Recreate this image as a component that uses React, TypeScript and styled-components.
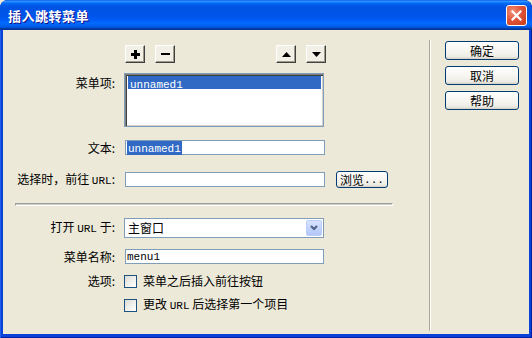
import React from "react";
import styled, { createGlobalStyle } from "styled-components";

const Global = createGlobalStyle`
  html, body { margin: 0; padding: 0; background: #ECE9D8; }
  body { font-family: "Noto Sans CJK SC", "Noto Sans", sans-serif; font-size: 12px; color: #000; }
  * { box-sizing: border-box; }
`;

const Window = styled.div`
  width: 532px;
  height: 338px;
  background: #0842D8;
  border-radius: 8px 8px 0 0;
  display: flex;
  flex-direction: column;
  overflow: hidden;
  box-shadow: inset 1px 0 0 #1F5EE8, inset -1px 0 0 #001EA0, inset 0 -1px 0 #001EA0;
`;

const TitleBar = styled.div`
  height: 30px;
  flex: none;
  display: flex;
  align-items: center;
  justify-content: space-between;
  padding: 0 5px 0 8px;
  border-radius: 8px 8px 0 0;
  background: linear-gradient(180deg, #0058EE 0%, #3593FF 4%, #288EFF 6%, #127DFF 8%, #036FFC 10%, #0262EE 14%, #0057E5 20%, #0054E3 24%, #0055EB 56%, #005BF5 66%, #026AFE 76%, #0062EF 86%, #0052D6 92%, #0040AB 94%, #003092 100%);
`;

const Title = styled.span`
  color: #fff;
  font-weight: bold;
  font-size: 13px;
  line-height: 16px;
  letter-spacing: 0.5px;
  text-shadow: 1px 1px 0 #0F1089;
  margin-top: 1px;
`;

const CloseButton = styled.div`
  width: 21px;
  height: 21px;
  margin-top: 1px;
  border: 1px solid #fff;
  border-radius: 3px;
  background: radial-gradient(circle at 30% 30%, #F0937A 0%, #E0553A 45%, #C73B17 100%);
  display: flex;
  align-items: center;
  justify-content: center;
`;

const Client = styled.div`
  flex: 1;
  margin: 0 3px 4px 3px;
  background: #ECE9D8;
  display: flex;
`;

const MainPanel = styled.div`
  width: 426px;
  flex: none;
  display: flex;
  flex-direction: column;
  padding-top: 15px;
`;

const VDivider = styled.div`
  width: 2px;
  flex: none;
  margin: 10px 0 3px 0;
  border-left: 1px solid #ACA899;
  border-right: 1px solid #fff;
`;

const SidePanel = styled.div`
  flex: 1;
  display: flex;
  flex-direction: column;
  gap: 6px;
  padding: 11px 0 0 14px;
`;

const PushButton = styled.div<{ $w?: number; $h?: number }>`
  width: ${(p) => p.$w ?? 74}px;
  height: ${(p) => p.$h ?? 19}px;
  border: 1px solid #003C74;
  border-radius: 3px;
  background: linear-gradient(180deg, #FFFFFF 0%, #F4F3EE 60%, #ECEBE4 85%, #D6D0C5 100%);
  display: flex;
  align-items: center;
  justify-content: center;
  font-size: 12px;
  line-height: 14px;
  flex: none;
`;

const ToolRow = styled.div`
  margin-left: 122px;
  width: 201px;
  height: 18px;
  display: flex;
  justify-content: space-between;
`;

const ToolGroup = styled.div`
  display: flex;
  gap: 10px;
`;

const SmallButton = styled.div`
  width: 20px;
  height: 18px;
  background: #F1EFE6;
  border: 1px solid;
  border-color: #fff #404040 #404040 #fff;
  box-shadow: inset -1px -1px 0 #9D9A8A;
  display: flex;
  align-items: center;
  justify-content: center;
`;

const Row = styled.div<{ $mt: number; $top?: boolean }>`
  display: flex;
  align-items: ${(p) => (p.$top ? "flex-start" : "center")};
  margin-top: ${(p) => p.$mt}px;
`;

const Label = styled.div<{ $pt?: number }>`
  width: 112px;
  margin-right: 10px;
  text-align: right;
  white-space: nowrap;
  line-height: 14px;
  padding-top: ${(p) => p.$pt ?? 0}px;
  flex: none;
`;

const Mono = styled.span`
  font-family: "Liberation Mono", "DejaVu Sans Mono", monospace;
  font-size: 11px;
`;

const ListBox = styled.div`
  width: 200px;
  height: 54px;
  margin-left: -1px;
  background: #fff;
  border: 1px solid #7F9DB9;
  box-shadow: inset 1px 1px 0 #808080, inset 2px 2px 0 #404040, inset -1px -1px 0 #D4D0C8;
  padding: 2px 2px 0 3px;
`;

const ListItem = styled.div<{ $selected?: boolean }>`
  height: 13px;
  line-height: 13px;
  padding-left: 2px;
  background: ${(p) => (p.$selected ? "#316AC5" : "transparent")};
  color: ${(p) => (p.$selected ? "#fff" : "#000")};
`;

const TextField = styled.div<{ $w?: number }>`
  width: ${(p) => p.$w ?? 200}px;
  height: 15px;
  background: #fff;
  border: 1px solid #7F9DB9;
  display: flex;
  align-items: center;
  padding-left: 1px;
  line-height: 12px;
  flex: none;
`;

const Selected = styled.span`
  background: #316AC5;
  color: #fff;
  padding: 0 1px;
`;

const HSeparator = styled.div`
  margin: 15px 0 0 12px;
  width: 378px;
  height: 3px;
  border-top: 1px solid #9D9D9D;
  border-left: 1px solid #9D9D9D;
  border-bottom: 1px solid #fff;
  border-right: 1px solid #fff;
  background: #D0CEC2;
`;

const Select = styled.div`
  width: 200px;
  height: 20px;
  margin-left: -1px;
  background: #fff;
  border: 1px solid #7F9DB9;
  display: flex;
  align-items: center;
  justify-content: space-between;
  padding: 0 1px 0 3px;
  line-height: 14px;
`;

const DropButton = styled.div`
  width: 16px;
  height: 16px;
  border: 1px solid #B9CDFA;
  border-radius: 2px;
  background: linear-gradient(180deg, #D9E4FD 0%, #C3D4FC 50%, #B3C7F8 100%);
  display: flex;
  align-items: center;
  justify-content: center;
`;

const CheckRow = styled.div<{ $mt: number }>`
  display: flex;
  align-items: center;
  margin-top: ${(p) => p.$mt}px;
  line-height: 14px;
`;

const CheckSpacer = styled.div`
  width: 122px;
  margin-left: -1px;
  flex: none;
`;

const CheckBox = styled.div`
  width: 13px;
  height: 13px;
  flex: none;
  border: 1px solid #1C5180;
  background: linear-gradient(135deg, #DCDCD7 0%, #F2F2EE 60%, #FFFFFF 100%);
  margin-right: 6px;
`;

const CheckLabel = styled.span`
  white-space: nowrap;
`;

export default function App() {
  return (
    <>
      <Global />
      <Window>
        <TitleBar>
          <Title>插入跳转菜单</Title>
          <CloseButton>
            <svg width="11" height="11" viewBox="0 0 11 11">
              <path d="M1.5 1.5 L9.5 9.5 M9.5 1.5 L1.5 9.5" stroke="#fff" strokeWidth="2.2" strokeLinecap="square" />
            </svg>
          </CloseButton>
        </TitleBar>
        <Client>
          <MainPanel>
            <ToolRow>
              <ToolGroup>
                <SmallButton>
                  <svg width="9" height="9" viewBox="0 0 9 9">
                    <path d="M3 0h3v3h3v3H6v3H3V6H0V3h3z" fill="#000" />
                  </svg>
                </SmallButton>
                <SmallButton>
                  <svg width="9" height="3" viewBox="0 0 9 3">
                    <rect x="0" y="0" width="9" height="2" fill="#000" />
                  </svg>
                </SmallButton>
              </ToolGroup>
              <ToolGroup>
                <SmallButton>
                  <svg width="9" height="5" viewBox="0 0 9 5">
                    <path d="M4.5 0 L9 5 H0 Z" fill="#000" />
                  </svg>
                </SmallButton>
                <SmallButton>
                  <svg width="9" height="5" viewBox="0 0 9 5">
                    <path d="M0 0 H9 L4.5 5 Z" fill="#000" />
                  </svg>
                </SmallButton>
              </ToolGroup>
            </ToolRow>

            <Row $mt={10} $top>
              <Label $pt={3}>菜单项:</Label>
              <ListBox>
                <ListItem $selected>
                  <Mono>unnamed1</Mono>
                </ListItem>
              </ListBox>
            </Row>

            <Row $mt={13}>
              <Label>文本:</Label>
              <TextField>
                <Selected>
                  <Mono>unnamed1</Mono>
                </Selected>
              </TextField>
            </Row>

            <Row $mt={16}>
              <Label>
                选择时，前往 <Mono>URL</Mono>:
              </Label>
              <TextField />
              <PushButton $w={52} $h={17} style={{ marginLeft: 11 }}>
                浏览<Mono>...</Mono>
              </PushButton>
            </Row>

            <HSeparator />

            <Row $mt={12}>
              <Label>
                打开 <Mono>URL</Mono> 于:
              </Label>
              <Select>
                <span>主窗口</span>
                <DropButton>
                  <svg width="8" height="6" viewBox="0 0 8 6">
                    <path d="M1 1 L4 4 L7 1" stroke="#4D6185" strokeWidth="2" fill="none" />
                  </svg>
                </DropButton>
              </Select>
            </Row>

            <Row $mt={11}>
              <Label>菜单名称:</Label>
              <TextField $w={199}>
                <Mono>menu1</Mono>
              </TextField>
            </Row>

            <CheckRow $mt={10}>
              <Label>选项:</Label>
              <CheckBox style={{ marginLeft: -1 }} />
              <CheckLabel>菜单之后插入前往按钮</CheckLabel>
            </CheckRow>

            <CheckRow $mt={9}>
              <CheckSpacer />
              <CheckBox />
              <CheckLabel>
                更改 <Mono>URL</Mono> 后选择第一个项目
              </CheckLabel>
            </CheckRow>
          </MainPanel>
          <VDivider />
          <SidePanel>
            <PushButton>确定</PushButton>
            <PushButton>取消</PushButton>
            <PushButton>帮助</PushButton>
          </SidePanel>
        </Client>
      </Window>
    </>
  );
}
